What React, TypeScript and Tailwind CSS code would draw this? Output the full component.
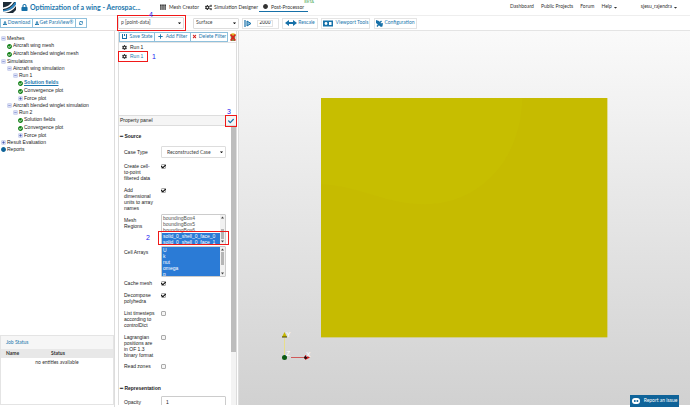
import React from 'react';
import {
  FaCaretDown,
  FaCheck,
  FaCheckCircle,
  FaCircle,
  FaCog,
  FaCogs,
  FaDownload,
  FaLock,
  FaPlus,
  FaSyncAlt,
  FaTh,
  FaTimes,
} from 'react-icons/fa';

type NodeIcon = 'minus' | 'plus' | 'check' | 'dot';

interface TreeNode {
  label: string;
  icon: NodeIcon;
  indent: string;
  active?: boolean;
}

const TREE: TreeNode[] = [
  { label: 'Meshes', icon: 'minus', indent: 'pl-px' },
  { label: 'Aircraft wing mesh', icon: 'check', indent: 'pl-[7px]' },
  { label: 'Aircraft blended winglet mesh', icon: 'check', indent: 'pl-[7px]' },
  { label: 'Simulations', icon: 'minus', indent: 'pl-px' },
  { label: 'Aircraft wing simulation', icon: 'minus', indent: 'pl-[7px]' },
  { label: 'Run 1', icon: 'minus', indent: 'pl-[13px]' },
  { label: 'Solution fields', icon: 'check', indent: 'pl-[18px]', active: true },
  { label: 'Convergence plot', icon: 'check', indent: 'pl-[18px]' },
  { label: 'Force plot', icon: 'plus', indent: 'pl-[18px]' },
  { label: 'Aircraft blended winglet simulation', icon: 'minus', indent: 'pl-[7px]' },
  { label: 'Run 2', icon: 'minus', indent: 'pl-[13px]' },
  { label: 'Solution fields', icon: 'check', indent: 'pl-[18px]' },
  { label: 'Convergence plot', icon: 'check', indent: 'pl-[18px]' },
  { label: 'Force plot', icon: 'plus', indent: 'pl-[18px]' },
  { label: 'Result Evaluation', icon: 'plus', indent: 'pl-px' },
  { label: 'Reports', icon: 'dot', indent: 'pl-px' },
];

const MESH_REGIONS = [
  'boundingBox4',
  'boundingBox5',
  'boundingBox6',
  'solid_0_shell_0_face_0',
  'solid_0_shell_0_face_1',
];

const CELL_ARRAYS = ['U', 'k', 'nut', 'omega', 'p'];

const Logo: React.FC = () => (
  <svg viewBox="0 0 13 13" className="size-[13px] shrink-0">
    <path d="M0 1H13V9L10 12H0Z" fill="#1d2b36" />
    <path d="M0 6.500C4 6 7 4 9 1H11C8.500 5 5 7.500 0 8Z" fill="#fff" />
    <path d="M0 9C5 8.500 9 6 12 1H13V3.500C10 8 6 10 0 10.500Z" fill="#2f86c0" />
    <path d="M0 10.500C6 10 10 8 13 3.500V5C10 9.500 6 11.500 1 12H0Z" fill="#fff" />
  </svg>
);

const TreeIcon: React.FC<{ icon: NodeIcon }> = ({ icon }) => {
  if (icon === 'check') return <FaCheckCircle className="size-[5px] shrink-0 text-[#118016]" />;
  if (icon === 'dot') return <FaCircle className="size-[5px] shrink-0 text-[#0f6399]" />;
  return (
    <svg viewBox="0 0 5 5" className="size-[5px] shrink-0">
      <rect x="0.800" y="0.800" width="3.400" height="3.400" fill="#e3e7fa" stroke="#a9b3e0" strokeWidth="0.600" />
      <path
        d={icon === 'plus' ? 'M1.300 2.500H3.700M2.500 1.300V3.700' : 'M1.300 2.500H3.700'}
        stroke={icon === 'plus' ? '#3c4fae' : '#7482c8'}
        strokeWidth="0.700"
      />
    </svg>
  );
};

const ToolButton: React.FC<{ label?: string; name?: string; className: string; children: React.ReactNode }> = ({
  label,
  name,
  className,
  children,
}) => (
  <button
    type="button"
    aria-label={name}
    className={`flex items-center justify-center whitespace-nowrap border bg-white font-['Lato',sans-serif] text-[#1c77ad] ${className}`}
  >
    {children}
    {label}
  </button>
);

const Scrollbar: React.FC<{ thumb: string }> = ({ thumb }) => (
  <div className="flex w-[5px] shrink-0 flex-col items-center bg-[#f1f1f1]">
    <svg viewBox="0 0 5 5" className="size-[5px]"><path d="M1 3.500 2.500 1.500 4 3.500Z" fill="#444" /></svg>
    <div className="relative w-full flex-1">
      <div className={`absolute inset-x-px bg-[#b5b5b5] ${thumb}`} />
    </div>
    <svg viewBox="0 0 5 5" className="size-[5px]"><path d="M1 1.500 2.500 3.500 4 1.500Z" fill="#444" /></svg>
  </div>
);

const ListBox: React.FC<{ id: string; items: string[]; selected: string[]; thumb: string }> = ({
  id,
  items,
  selected,
  thumb,
}) => (
  <div className="flex rounded-[1px] border border-[#ccc]">
    <select
      id={id}
      multiple
      size={5}
      defaultValue={selected}
      className="h-[29px] min-w-0 flex-1 overflow-hidden bg-white text-[5px] leading-[6px] text-[#555] outline-none"
    >
      {items.map((item) => (
        <option
          key={item}
          className="h-[6px] min-h-0 px-px py-0 leading-[6px] checked:bg-[linear-gradient(#2b7bd6,#2b7bd6)] checked:[-webkit-text-fill-color:white]"
        >
          {item}
        </option>
      ))}
    </select>
    <Scrollbar thumb={thumb} />
  </div>
);

const Field: React.FC<{ id: string; label: string; gap: string; children: React.ReactNode }> = ({
  id,
  label,
  gap,
  children,
}) => (
  <div className={`flex gap-1.5 ${gap}`}>
    <label htmlFor={id} className="w-[31px] shrink-0">
      {label}
    </label>
    <div className="relative min-w-0 flex-1">{children}</div>
  </div>
);

const Check: React.FC<{ id: string; label: string; gap: string; checked?: boolean }> = ({
  id,
  label,
  gap,
  checked = false,
}) => (
  <Field id={id} label={label} gap={gap}>
    <div className="relative mt-px size-[5px]">
      <input
        id={id}
        type="checkbox"
        defaultChecked={checked}
        className="peer block size-[5px] appearance-none rounded-[1px] border border-[#aaa] bg-[#f5f5f5]"
      />
      <FaCheck className="pointer-events-none absolute inset-0 hidden size-[5px] text-black peer-checked:block" />
    </div>
  </Field>
);

// Red frame plus the step number that points at a control
const Marker: React.FC<{ step: number; box: string; number: string }> = ({ step, box, number }) => (
  <>
    <span className={`pointer-events-none absolute z-10 border border-[#f01818] ${box}`} />
    <span className={`pointer-events-none absolute z-10 text-[7px] leading-[7px] text-[#2020f0] ${number}`}>{step}</span>
  </>
);

const Header: React.FC = () => (
  <header className="flex h-4 shrink-0 items-center border-b border-[#eee] pb-px pl-[3px] font-['Lato',sans-serif] text-[5px] text-[#333]">
    <Logo />
    <FaLock className="ml-[5px] size-[7px] text-[#1670a8]" />
    <h1 className="ml-0.5 w-[130px] whitespace-nowrap text-[7px] font-bold text-[#1c77ad]">
      Optimization of a wing - Aerospac...
    </h1>
    <nav className="flex items-center whitespace-nowrap leading-[6px]">
      <a href="#mesh" className="flex items-center gap-[3px]">
        <FaTh className="size-[6px]" />
        Mesh Creator
      </a>
      <a href="#simulation" className="ml-1.5 flex items-center gap-0.5">
        <FaCogs className="size-[7px]" />
        Simulation Designer
      </a>
      <a href="#post" className="relative ml-px flex h-2.5 items-center gap-[3px] border-b border-[#1670a8] px-1">
        <FaCircle className="size-[5px]" />
        Post-Processor
        <span className="absolute -right-1.5 -top-0.5 text-[4px] leading-[4px] text-[#3fa54b]">BETA</span>
      </a>
    </nav>
    <nav className="ml-auto flex items-center gap-[7px] whitespace-nowrap pr-3">
      <a href="#dashboard">Dashboard</a>
      <a href="#projects">Public Projects</a>
      <a href="#forum">Forum</a>
      <button type="button" className="flex items-center gap-px">
        Help <FaCaretDown className="size-[5px]" />
      </button>
      <button type="button" className="ml-4 flex items-center gap-px">
        sjesu_rajendra <FaCaretDown className="size-[5px]" />
      </button>
    </nav>
  </header>
);

const PickList: React.FC<{ name: string; value: string; className: string; id?: string }> = ({
  name,
  value,
  className,
  id,
}) => (
  <div className={`relative ${className}`}>
    <select
      id={id}
      aria-label={name}
      className="block size-full appearance-none rounded-[1px] border border-[#ddd] bg-white px-0.5 font-['Lato',sans-serif] text-[5px] text-[#444]"
    >
      <option>{value}</option>
    </select>
    <FaCaretDown className="pointer-events-none absolute right-0.5 top-1/2 size-[5px] -translate-y-1/2 text-black" />
  </div>
);

const Toolbar: React.FC = () => (
  <div className="flex h-[15px] shrink-0 items-center border-b border-[#e4e4e4] text-[5px]">
    <div className="flex w-[118px] shrink-0">
      <ToolButton label="Download" className="h-[10px] w-[33px] gap-px border-[#8fc0dc]">
        <FaDownload className="size-[4px]" />
      </ToolButton>
      <ToolButton label="Get ParaView®" className="-ml-px h-[10px] w-11 gap-px border-[#8fc0dc]">
        <FaDownload className="size-[4px]" />
      </ToolButton>
      <ToolButton name="Refresh" className="-ml-px h-[10px] w-3 border-[#8fc0dc]">
        <FaSyncAlt className="size-[4px]" />
      </ToolButton>
    </div>
    <div className="relative flex items-center">
      <PickList name="Field" value="p [point-data]" className="h-3 w-[66px]" />
      <Marker step={4} box="-left-px -top-0.5 h-4 w-[69px]" number="left-[31px] -top-[6px]" />
    </div>
    <PickList name="Representation mode" value="Surface" className="ml-[9px] h-[11px] w-[46px]" />
    <div className="ml-[3px] flex h-[11px] w-[37px] items-center gap-[5px] border border-[#e4e4e4] px-px">
      <svg viewBox="0 0 8 7" className="h-[7px] w-2 shrink-0"><path d="M1 0V7" stroke="#1670a8" strokeWidth="1.200" /><path d="M3 1 7 3.500 3 6Z" fill="#8fbdd8" stroke="#1670a8" /></svg>
      <input aria-label="Time step" defaultValue="2000" className="h-[7px] w-4 border border-[#e4e4e4] text-center text-[5px] text-[#222]" />
    </div>
    <ToolButton label="Rescale" className="ml-[3px] h-[11px] w-9 gap-px border-[#e4e4e4]">
      <svg viewBox="0 0 12 6" className="h-[6px] w-3"><path d="M0 3 4 0V2H8V0L12 3 8 6V4H4V6Z" fill="#1670a8" /></svg>
    </ToolButton>
    <ToolButton label="Viewport Tools" className="ml-[3px] h-[11px] w-[49px] gap-[3px] border-[#e4e4e4]">
      <svg viewBox="0 0 10 7" className="h-[7px] w-2.5"><rect y="0.500" width="10" height="6" fill="#1670a8" /><circle cx="3" cy="3.500" r="1.400" fill="#fff" /><rect x="6" y="2" width="2.500" height="3" fill="#fff" /></svg>
    </ToolButton>
    <ToolButton label="Configuration" className="ml-1 h-[11px] w-[43px] gap-px border-[#e4e4e4]">
      <svg viewBox="0 0 7 7" className="size-[7px]"><path d="M0 0 3 1 7 6 5 7 0 3Z" fill="#1670a8" /><path d="M1 6.500 3 4M4 2.500 5.500 1M5 4H7" stroke="#1670a8" strokeWidth="1.300" /></svg>
    </ToolButton>
  </div>
);

const ProjectTree: React.FC = () => (
  <ul className="pt-1 text-[5px] text-[#222]">
    {TREE.map((node, index) => (
      <li
        key={index}
        className={`flex items-center gap-px whitespace-nowrap ${node.icon === 'check' ? 'h-2' : 'h-[7px]'} ${node.indent}`}
      >
        <TreeIcon icon={node.icon} />
        <a href="#node" className={node.active ? 'font-bold text-[#1c77ad] underline' : undefined}>
          {node.label}
        </a>
      </li>
    ))}
  </ul>
);

const JobStatus: React.FC = () => (
  <section className="mb-0.5 mt-auto h-[70px] border border-[#e4e4e4] font-['Lato',sans-serif] text-[5px] text-[#333]">
    <h2 className="bg-[#f6f6f6] py-0.5 pl-[5px] leading-[9px] text-[#1c77ad]">Job Status</h2>
    <table className="w-full text-left leading-[9px]">
      <thead className="bg-[#e8e8e8]">
        <tr>
          <th className="w-[50px] pl-[5px]">Name</th>
          <th>Status</th>
        </tr>
      </thead>
      <tbody>
        <tr>
          <td colSpan={2} className="text-center leading-[8px]">no entities available</td>
        </tr>
      </tbody>
    </table>
  </section>
);

const PropertyPanel: React.FC = () => (
  <>
    <div className="relative flex h-[11px] shrink-0 items-center border-y border-[#ddd] bg-[#f5f5f5] pl-px">
      <h2>Property panel</h2>
      <button type="button" aria-label="Apply" className="ml-auto mr-0.5 text-[#1670a8]">
        <FaCheck className="size-[6px]" />
      </button>
      <Marker step={3} box="-right-px -top-px h-3 w-3" number="right-[5px] -top-2" />
    </div>
    <div className="flex min-h-0 flex-1">
      <form className="min-w-0 flex-1 overflow-hidden px-[5px] pt-[7px] leading-[6px]">
        <h3 className="-ml-1 font-bold">━ Source</h3>
        <div className="mt-[7px] flex items-center gap-1.5">
          <label htmlFor="case" className="w-[31px] shrink-0">Case Type</label>
          <PickList id="case" name="Case Type" value="Reconstructed Case" className="h-3 flex-1 [&>select]:pl-[5px]" />
        </div>
        <Check id="cell" label="Create cell-to-point filtered data" gap="mt-[5px]" checked />
        <Check id="units" label="Add dimensional units to array names" gap="mt-1.5" checked />
        <div className="mt-[3px] flex gap-1.5">
          <label htmlFor="regions" className="w-[31px] shrink-0 pt-[3px]">Mesh Regions</label>
          <div className="relative min-w-0 flex-1">
            <ListBox id="regions" items={MESH_REGIONS} selected={MESH_REGIONS.slice(3)} thumb="bottom-0 h-2.5" />
            <Marker step={2} box="-left-[3px] -right-[3px] top-[17px] h-[14px]" number="-left-[15px] top-5" />
          </div>
        </div>
        <div className="mt-px flex gap-1.5">
          <label htmlFor="arrays" className="w-[31px] shrink-0 pt-[3px]">Cell Arrays</label>
          <div className="min-w-0 flex-1">
            <ListBox id="arrays" items={CELL_ARRAYS} selected={CELL_ARRAYS} thumb="top-0 h-[13px]" />
          </div>
        </div>
        <Check id="cache" label="Cache mesh" gap="mt-[3px]" checked />
        <Check id="poly" label="Decompose polyhedra" gap="mt-1.5" checked />
        <Check id="steps" label="List timesteps according to controlDict" gap="mt-1.5" />
        <Check id="lagrangian" label="Lagrangian positions are in OF 1.3 binary format" gap="mt-1.5" />
        <Check id="zones" label="Read zones" gap="mt-[5px]" />
        <h3 className="-ml-1 mt-4 font-bold">━ Representation</h3>
        <div className="mt-[5px] flex gap-1.5">
          <label htmlFor="opacity" className="w-[31px] shrink-0 pt-[3px]">Opacity</label>
          <input id="opacity" defaultValue="1" className="h-3 min-w-0 flex-1 rounded-[1px] border border-[#ccc] px-1" />
        </div>
      </form>
      <div className="w-[5px] shrink-0 bg-[#f3f3f3]">
        <div className="h-[226px] bg-[#bdbdbd]" />
      </div>
    </div>
  </>
);

const Pipeline: React.FC = () => (
  <aside className="mb-0.5 flex w-[119px] shrink-0 flex-col border-x border-[#ddd] text-[5px] text-[#222]">
    <div className="flex h-3 shrink-0 items-center border-b border-[#e4e4e4]">
      <ToolButton label="Save State" className="h-[10px] w-9 gap-[3px] border-[#8fc0dc]">
        <svg viewBox="0 0 5 5" className="size-[5px]"><path d="M0 0H1V4H4V0H5V5H0ZM2 0H3V2H2Z" fill="#1670a8" /></svg>
      </ToolButton>
      <ToolButton label="Add Filter" className="-ml-px h-[10px] w-[37px] gap-[3px] border-[#8fc0dc]">
        <FaPlus className="size-[5px]" />
      </ToolButton>
      <ToolButton label="Delete Filter" className="-ml-px h-[10px] w-[38px] gap-0.5 border-[#8fc0dc]">
        <FaTimes className="size-[5px] text-[#d01c1c]" />
      </ToolButton>
      <button type="button" aria-label="Delete all" className="ml-0.5">
        <svg viewBox="0 0 6 8" className="h-2 w-[6px]">
          <path d="M0.500 2H5.500L5 8H1Z" fill="#8a8a4a" />
          <path d="M0.500 1.200C2 0 4 0 5.500 1.200V2.500H0.500Z" fill="#e0b820" />
          <path d="M0.500 1.500 5.500 7.500M5.500 1.500 0.500 7.500" stroke="#e02020" strokeWidth="1.500" />
        </svg>
      </button>
    </div>
    <ul className="relative h-[72px] shrink-0">
      {[1, 2].map((run) => (
        <li key={run} className={`flex h-[9px] items-center gap-[3px] pl-[3px] ${run === 2 ? 'text-[#1c77ad]' : ''}`}>
          <FaCog className="size-[5px] text-[#333]" />
          Run 1
        </li>
      ))}
      <Marker step={1} box="-left-px top-2 h-[11px] w-[30px]" number="left-[33px] top-2.5" />
    </ul>
    <PropertyPanel />
  </aside>
);

const Viewport: React.FC = () => (
  <main className="relative mb-0.5 ml-px flex min-w-0 flex-1 items-center justify-center border-l border-[#ddd] bg-linear-to-b from-[#fafafa] to-[#d1d1d1]">
    <svg viewBox="0 0 286 239" preserveAspectRatio="none" className="h-[64%] w-[63.5%]">
      <rect width="286" height="239" fill="#c6bb00" />
      <path d="M0 0H201C200 60 160 106 103 106C65 106 40 88 0 86Z" fill="#c7be00" />
    </svg>
    <svg viewBox="0 0 36 36" className="absolute bottom-[40px] left-[40px] size-9">
      <path d="M5.500 26V9" stroke="#e8de8c" />
      <path d="M3 8 5.500 3 8 8Z" fill="#c5b800" />
      <path d="M3 8H8" stroke="#4a4600" />
      <path d="M12 28.500H26" stroke="#d05a5a" />
      <path d="M26 26 31 28.500 26 31Z" fill="#d01818" />
      <circle cx="26.500" cy="28.500" r="1.500" fill="#2a0a0a" />
      <circle cx="5.500" cy="28.500" r="2.500" fill="#0b5a14" />
      <g className="fill-white font-['Liberation_Sans',sans-serif] text-[7px]">
        <text x="7" y="8">Y</text>
        <text x="27" y="28">X</text>
        <text x="7" y="27">Z</text>
      </g>
    </svg>
  </main>
);

const App: React.FC = () => (
  <div className="relative flex h-screen flex-col overflow-hidden bg-white font-['Liberation_Sans',sans-serif]">
    <Header />
    <Toolbar />
    <div className="flex min-h-0 flex-1">
      <aside className="mr-[3px] flex w-[115px] shrink-0 flex-col border-r border-[#ddd]">
        <ProjectTree />
        <JobStatus />
      </aside>
      <Pipeline />
      <Viewport />
    </div>
    <button
      type="button"
      className="absolute bottom-0 right-[11px] flex h-3 w-[49px] items-center justify-center gap-1 bg-[#0f6399] font-['Lato',sans-serif] text-[5px] text-white"
    >
      <svg viewBox="0 0 8 6" className="h-[6px] w-2"><rect width="8" height="6" rx="3" fill="#fff" /><circle cx="2.800" cy="3" r="1" fill="#0f6399" /><circle cx="5.400" cy="3" r="1" fill="#0f6399" /></svg>
      Report an issue
    </button>
  </div>
);

export default App;
